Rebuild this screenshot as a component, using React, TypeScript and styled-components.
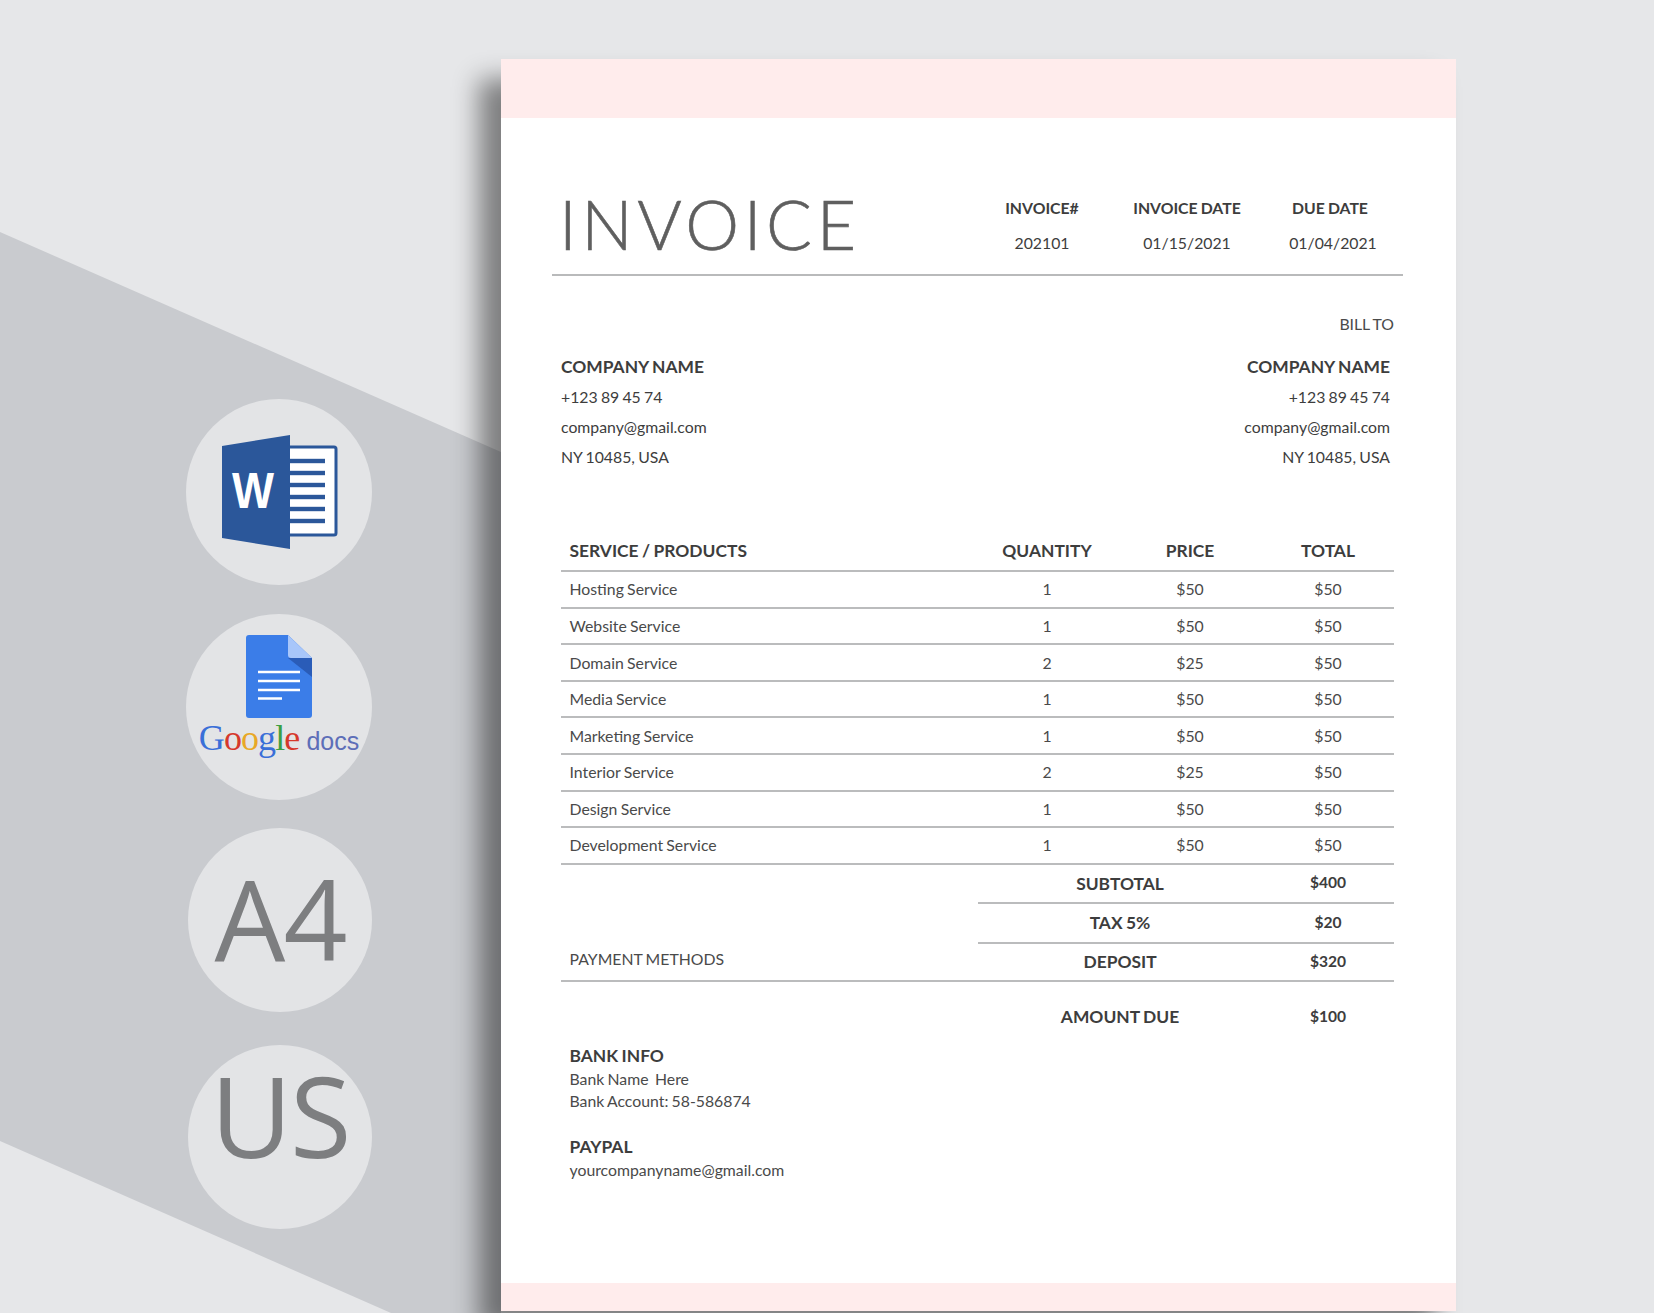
import React from 'react'
import styled, { createGlobalStyle } from 'styled-components'

const GlobalStyle = createGlobalStyle`
  html, body {
    margin: 0;
    padding: 0;
    background: #e6e7e9;
  }
  body {
    font-family: Lato, 'Liberation Sans', sans-serif;
  }
`

const Stage = styled.div`
  position: relative;
  display: flex;
  width: 1654px;
  height: 1313px;
  overflow: hidden;
  background: #e6e7e9;

  &::before {
    content: '';
    position: absolute;
    inset: 0;
    background: #c9cbcf;
    clip-path: polygon(0 232px, 501px 452px, 501px 1313px, 391px 1313px, 0 1141px);
  }
`

const Sidebar = styled.aside`
  position: relative;
  display: flex;
  flex-direction: column;
  flex: none;
  width: 501px;
  padding: 399px 0 0 186px;
  box-sizing: border-box;
`

const Badge = styled.div<{ $size: number; $top: number; $left?: number }>`
  display: flex;
  flex-direction: column;
  align-items: center;
  flex: none;
  box-sizing: border-box;
  width: ${(p) => p.$size}px;
  height: ${(p) => p.$size}px;
  margin-top: ${(p) => p.$top}px;
  margin-left: ${(p) => p.$left ?? 0}px;
  border-radius: 50%;
  background: #e3e4e6;
`

const WordMark = styled.svg`
  width: 118px;
  height: 118px;
  margin-top: 34px;
`

const DocsMark = styled.svg`
  width: 66px;
  height: 83px;
  margin-top: 21px;
`

const GoogleLine = styled.div`
  display: flex;
  align-items: baseline;
  margin-top: 0;
  white-space: nowrap;
`

const GoogleWord = styled.span`
  font-family: 'Liberation Serif', serif;
  font-size: 36px;
  line-height: 40px;
  letter-spacing: -0.9px;
`

const Letter = styled.span<{ $color: string }>`
  color: ${(p) => p.$color};
`

const DocsWord = styled.span`
  margin-left: 7px;
  font-family: 'Liberation Sans', sans-serif;
  font-size: 25px;
  color: #5d6eb8;
`

const SizeText = styled.div<{ $top: number }>`
  margin-top: ${(p) => p.$top}px;
  font-family: 'Open Sans', sans-serif;
  font-size: 112px;
  line-height: 112px;
  letter-spacing: -2px;
  color: #7d7e80;
`

const Paper = styled.main`
  position: relative;
  display: flex;
  flex-direction: column;
  flex: none;
  width: 955px;
  height: 1252px;
  margin-top: 59px;
  background: #fff;
  box-shadow: -22px 20px 24px rgba(0, 0, 0, 0.45);
`

const Band = styled.div<{ $height: number }>`
  flex: none;
  height: ${(p) => p.$height}px;
  background: #ffecec;
`

const Body = styled.div`
  flex: 1;
  color: #444;
  word-spacing: -0.8px;
`

const HeaderRow = styled.header`
  display: flex;
  justify-content: space-between;
  box-sizing: border-box;
  height: 98px;
  margin: 60px 53px 0 51px;
  padding-right: 15px;
  border-bottom: 2px solid #b9babb;
`

const Title = styled.h1`
  margin: -2px 0 0 7px;
  font-size: 68px;
  font-weight: 300;
  line-height: 96px;
  letter-spacing: 4.6px;
  color: #5f5f5f;
  -webkit-text-stroke: 0.6px #5f5f5f;
`

const Meta = styled.div`
  display: grid;
  grid-template-columns: 120px 170px 116px;
  grid-template-rows: 35px 36px;
  margin-top: 13px;
`

const MetaCell = styled.div<{ $bold?: boolean; $shift?: number }>`
  padding-left: ${(p) => p.$shift ?? 0}px;
  text-align: center;
  font-size: 15.8px;
  font-weight: ${(p) => (p.$bold ? 700 : 400)};
  line-height: 34px;
  color: #3d3d3d;
`

const BillTo = styled.div`
  margin: 33px 62px 13px 0;
  text-align: right;
  font-size: 15.8px;
  line-height: 30px;
  color: #4a4a4a;
`

const Parties = styled.section`
  display: flex;
  justify-content: space-between;
  margin: 0 66px 0 60px;
`

const Party = styled.div<{ $right?: boolean }>`
  text-align: ${(p) => (p.$right ? 'right' : 'left')};
`

const PartyLine = styled.div<{ $bold?: boolean }>`
  font-size: ${(p) => (p.$bold ? 17.4 : 15.8)}px;
  font-weight: ${(p) => (p.$bold ? 700 : 400)};
  line-height: 29.9px;
  color: #3d3d3d;
`

const Table = styled.section`
  margin: 60.4px 62px 0 60px;
`

const Row = styled.div<{ $head?: boolean }>`
  display: grid;
  grid-template-columns: 415px 142px 144px 132px;
  align-items: center;
  box-sizing: border-box;
  height: ${(p) => (p.$head ? 40 : 36.6)}px;
  padding-bottom: ${(p) => (p.$head ? 2 : 1)}px;
  border-bottom: 2px solid #bbbcbd;
  font-size: ${(p) => (p.$head ? 17.4 : 15.8)}px;
  font-weight: ${(p) => (p.$head ? 700 : 400)};
  color: ${(p) => (p.$head ? '#3d3d3d' : '#4a4a4a')};
`

const NameCell = styled.div`
  padding-left: 8.5px;
`

const Cell = styled.div`
  text-align: center;
`

const Summary = styled.div`
  display: flex;
  box-sizing: border-box;
  height: 117px;
  border-bottom: 2px solid #bbbcbd;
`

const PaymentLabel = styled.div`
  flex: none;
  align-self: flex-end;
  width: 417px;
  padding: 0 0 10px 8.5px;
  box-sizing: border-box;
  font-size: 15.8px;
  line-height: 22px;
  color: #4a4a4a;
`

const Totals = styled.div`
  flex: 1;
`

const TotalRow = styled.div<{ $height: number; $line?: boolean; $due?: boolean }>`
  display: grid;
  grid-template-columns: 284px 132px;
  align-items: center;
  box-sizing: border-box;
  height: ${(p) => p.$height}px;
  margin: ${(p) => (p.$due ? '10px 0 0 417px' : 0)};
  border-bottom: ${(p) => (p.$line ? '2px solid #bbbcbd' : 'none')};
`

const TotalLabel = styled.div`
  text-align: center;
  font-size: 17.4px;
  font-weight: 700;
  color: #3d3d3d;
`

const TotalValue = styled.div`
  padding-bottom: 2px;
  text-align: center;
  font-size: 15.6px;
  font-weight: 700;
  color: #3d3d3d;
`

const Notes = styled.section`
  margin: 2px 0 0 68.5px;
`

const NoteTitle = styled.div<{ $gap?: number }>`
  margin-top: ${(p) => p.$gap ?? 0}px;
  font-size: 17.4px;
  font-weight: 700;
  line-height: 24px;
  color: #3d3d3d;
`

const NoteLine = styled.div`
  font-size: 15.8px;
  line-height: 22px;
  color: #4a4a4a;
`

const services = [
  ['Hosting Service', '1', '$50', '$50'],
  ['Website Service', '1', '$50', '$50'],
  ['Domain Service', '2', '$25', '$50'],
  ['Media Service', '1', '$50', '$50'],
  ['Marketing Service', '1', '$50', '$50'],
  ['Interior Service', '2', '$25', '$50'],
  ['Design Service', '1', '$50', '$50'],
  ['Development Service', '1', '$50', '$50'],
]

const google = [
  ['G', '#3a6fd8'],
  ['o', '#d6392c'],
  ['o', '#e8a826'],
  ['g', '#3a6fd8'],
  ['l', '#3c9f42'],
  ['e', '#d6392c'],
]

const partyLines = ['+123 89 45 74', 'company@gmail.com', 'NY 10485, USA']

const WordIcon = () => (
  <WordMark viewBox="220 433 118 118">
    <rect x="288" y="447" width="48" height="88" rx="2" fill="#fff" stroke="#2b579a" strokeWidth="3" />
    {[461, 473, 485, 497, 509, 521].map((y) => (
      <rect key={y} x="290" y={y - 2.2} width="35" height="4.4" fill="#2b579a" />
    ))}
    <path d="M222 446 L290 435 V549 L222 538 Z" fill="#2b579a" />
    <text
      x="253"
      y="508"
      fill="#fff"
      fontFamily="'Liberation Sans', sans-serif"
      fontWeight="700"
      fontSize="50"
      textAnchor="middle"
      textLength="42"
      lengthAdjust="spacingAndGlyphs"
    >
      W
    </text>
  </WordMark>
)

const DocsIcon = () => (
  <DocsMark viewBox="247 635 66 83">
    <path
      d="M250 635 H289 L313 658 V715 A3 3 0 0 1 310 718 H250 A3 3 0 0 1 247 715 V638 A3 3 0 0 1 250 635 Z"
      fill="#3b7de8"
    />
    <path d="M289 635 L313 658 H292 A3 3 0 0 1 289 655 Z" fill="#a8c6fa" />
    <path d="M289 658 H313 V677 Z" fill="#2a5cb8" />
    <path d="M259 672 H301 M259 681 H301 M259 690 H301 M259 698.5 H283" stroke="#fff" strokeWidth="2.6" fill="none" />
  </DocsMark>
)

const App = () => (
  <Stage>
    <GlobalStyle />
    <Sidebar>
      <Badge $size={186} $top={0}>
        <WordIcon />
      </Badge>
      <Badge $size={186} $top={29}>
        <DocsIcon />
        <GoogleLine>
          <GoogleWord>
            {google.map(([letter, color], key) => (
              <Letter key={'letter-' + key} $color={color}>
                {letter}
              </Letter>
            ))}
          </GoogleWord>
          <DocsWord>docs</DocsWord>
        </GoogleLine>
      </Badge>
      <Badge $size={184} $top={28} $left={2}>
        <SizeText $top={34}>A4</SizeText>
      </Badge>
      <Badge $size={184} $top={33} $left={2}>
        <SizeText $top={14}>US</SizeText>
      </Badge>
    </Sidebar>
    <Paper>
      <Band $height={59} />
      <Body>
        <HeaderRow>
          <Title>INVOICE</Title>
          <Meta>
            <MetaCell $bold>INVOICE#</MetaCell>
            <MetaCell $bold>INVOICE DATE</MetaCell>
            <MetaCell $bold>DUE DATE</MetaCell>
            <MetaCell>202101</MetaCell>
            <MetaCell>01/15/2021</MetaCell>
            <MetaCell $shift={6}>01/04/2021</MetaCell>
          </Meta>
        </HeaderRow>
        <BillTo>BILL TO</BillTo>
        <Parties>
          <Party>
            <PartyLine $bold>COMPANY NAME</PartyLine>
            {partyLines.map((line) => (
              <PartyLine key={line}>{line}</PartyLine>
            ))}
          </Party>
          <Party $right>
            <PartyLine $bold>COMPANY NAME</PartyLine>
            {partyLines.map((line) => (
              <PartyLine key={line}>{line}</PartyLine>
            ))}
          </Party>
        </Parties>
        <Table>
          <Row $head>
            <NameCell>SERVICE / PRODUCTS</NameCell>
            <Cell>QUANTITY</Cell>
            <Cell>PRICE</Cell>
            <Cell>TOTAL</Cell>
          </Row>
          {services.map(([name, quantity, price, total]) => (
            <Row key={name}>
              <NameCell>{name}</NameCell>
              <Cell>{quantity}</Cell>
              <Cell>{price}</Cell>
              <Cell>{total}</Cell>
            </Row>
          ))}
          <Summary>
            <PaymentLabel>PAYMENT METHODS</PaymentLabel>
            <Totals>
              <TotalRow $height={39} $line>
                <TotalLabel>SUBTOTAL</TotalLabel>
                <TotalValue>$400</TotalValue>
              </TotalRow>
              <TotalRow $height={40} $line>
                <TotalLabel>TAX 5%</TotalLabel>
                <TotalValue>$20</TotalValue>
              </TotalRow>
              <TotalRow $height={36}>
                <TotalLabel>DEPOSIT</TotalLabel>
                <TotalValue>$320</TotalValue>
              </TotalRow>
            </Totals>
          </Summary>
          <TotalRow $height={50} $due>
            <TotalLabel>AMOUNT DUE</TotalLabel>
            <TotalValue>$100</TotalValue>
          </TotalRow>
        </Table>
        <Notes>
          <NoteTitle>BANK INFO</NoteTitle>
          <NoteLine>Bank Name&nbsp; Here</NoteLine>
          <NoteLine>Bank Account: 58-586874</NoteLine>
          <NoteTitle $gap={23}>PAYPAL</NoteTitle>
          <NoteLine>yourcompanyname@gmail.com</NoteLine>
        </Notes>
      </Body>
      <Band $height={28} />
    </Paper>
  </Stage>
)

export default App
